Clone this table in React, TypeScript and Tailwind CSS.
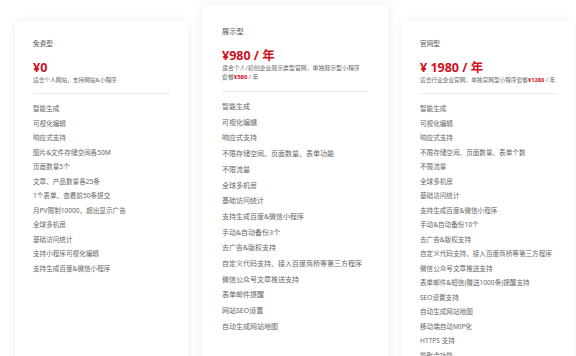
import React from 'react'

type Plan = {
  name: string
  price: string
  desc: React.ReactNode
  items: string[]
}

const FREE: Plan = {
  name: '免费型',
  price: '¥0',
  desc: '适合个人网站，支持网站&小程序',
  items: [
    '智能生成',
    '可视化编辑',
    '响应式支持',
    '图片&文件存储空间各50M',
    '页面数量5个',
    '文章、产品数量各25条',
    '1个表单、查看前50条提交',
    '月PV限制10000，超出显示广告',
    '全球多机房',
    '基础访问统计',
    '支持小程序可视化编辑',
    '支持生成百度&微信小程序',
  ],
}

const SHOW: Plan = {
  name: '展示型',
  price: '¥980 / 年',
  desc: (
    <>
      适合个人/初创企业展示类型官网，单独展示型小程序
      <br />
      套餐<span className="font-bold text-[#d0101b]">¥580</span> / 年
    </>
  ),
  items: [
    '智能生成',
    '可视化编辑',
    '响应式支持',
    '不限存储空间、页面数量、表单功能',
    '不限流量',
    '全球多机房',
    '基础访问统计',
    '支持生成百度&微信小程序',
    '手动&自动备份3个',
    '去广告&版权支持',
    '自定义代码支持、接入百度商桥等第三方程序',
    '微信公众号文章推送支持',
    '表单邮件提醒',
    '网站SEO设置',
    '自动生成网站地图',
  ],
}

const SITE: Plan = {
  name: '官网型',
  price: '¥ 1980 / 年',
  desc: (
    <>
      适合行业企业官网，单独官网型小程序套餐<span className="font-bold text-[#d0101b]">¥1280</span> / 年
    </>
  ),
  items: [
    '智能生成',
    '可视化编辑',
    '响应式支持',
    '不限存储空间、页面数量、表单个数',
    '不限流量',
    '全球多机房',
    '基础访问统计',
    '支持生成百度&微信小程序',
    '手动&自动备份10个',
    '去广告&版权支持',
    '自定义代码支持、接入百度商桥等第三方程序',
    '微信公众号文章推送支持',
    '表单邮件&短信(赠送1000条)提醒支持',
    'SEO设置支持',
    '自动生成网站地图',
    '移动端自动MIP化',
    'HTTPS 支持',
    '能聚合功能',
  ],
}

function SideCard({ plan, width }: { plan: Plan; width: string }) {
  return (
    <div className={`mt-[21px] h-[400px] shrink-0 rounded-[2px] bg-white px-[18px] pt-[18px] shadow-[0_0_10px_rgba(0,0,0,0.07)] ${width}`}>
      <div className="text-[6.7px] leading-[10px] text-[#555]">{plan.name}</div>
      <div className="mt-[10px] text-[12.5px] font-bold leading-[17px] text-[#d0101b]">{plan.price}</div>
      <div className="whitespace-nowrap text-[5.7px] leading-[9px] text-[#666]">{plan.desc}</div>
      <div className="mt-[8px] h-px bg-[#ececec]" />
      <ul className="mt-[8px]">
        {plan.items.map((it, i) => (
          <li key={i} className="whitespace-nowrap text-[6.6px] leading-[14.5px] text-[#666]">
            {it}
          </li>
        ))}
      </ul>
    </div>
  )
}

export default function App() {
  return (
    <div
      className="flex h-[356px] w-[576px] items-start gap-[14px] overflow-hidden bg-white pl-[15px]"
      style={{ fontFamily: '"Noto Sans", "Noto Sans CJK SC", sans-serif' }}
    >
      <SideCard plan={FREE} width="w-[173px]" />

      {/* highlighted middle card */}
      <div className="mt-[5px] h-[400px] w-[186px] shrink-0 rounded-[2px] bg-white px-[20px] pt-[21px] shadow-[0_0_12px_rgba(0,0,0,0.08)]">
        <div className="text-[7.2px] leading-[10px] text-[#555]">{SHOW.name}</div>
        <div className="mt-[11px] text-[12.5px] font-bold leading-[17px] text-[#d0101b]">{SHOW.price}</div>
        <div className="whitespace-nowrap text-[5.9px] leading-[9px] text-[#666]">{SHOW.desc}</div>
        <div className="mt-[9px] h-px bg-[#ececec]" />
        <ul className="mt-[7px]">
          {SHOW.items.map((it, i) => (
            <li key={i} className="whitespace-nowrap text-[7px] leading-[15.7px] text-[#666]">
              {it}
            </li>
          ))}
        </ul>
      </div>

      <SideCard plan={SITE} width="w-[173px]" />
    </div>
  )
}
